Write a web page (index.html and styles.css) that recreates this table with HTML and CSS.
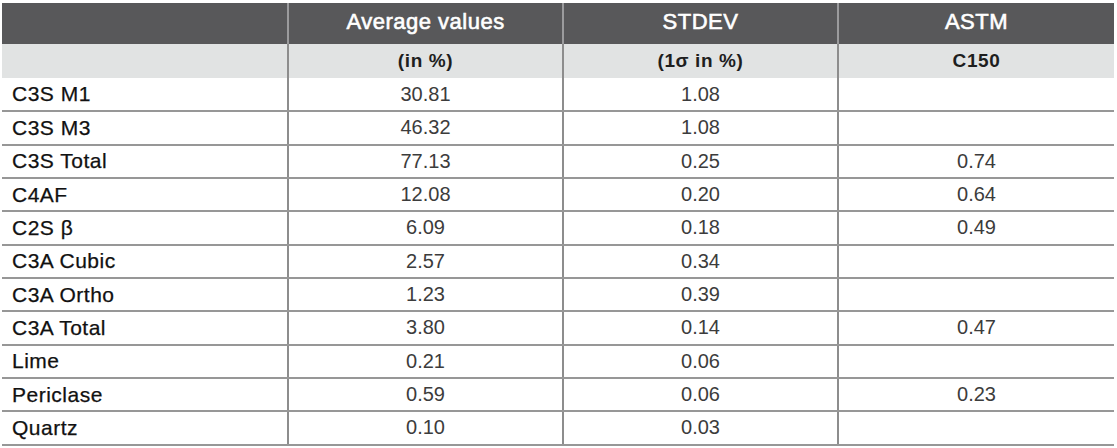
FILE: index.html
```html
<!DOCTYPE html>
<html>
<head>
<meta charset="utf-8">
<link rel="stylesheet" href="styles.css">
</head>
<body>
<table class="data">
  <colgroup>
    <col class="c-label"><col class="c-val"><col class="c-val"><col class="c-last">
  </colgroup>
  <thead>
    <tr class="head">
      <th></th><th>Average values</th><th>STDEV</th><th>ASTM</th>
    </tr>
    <tr class="sub">
      <th></th><th>(in %)</th><th>(1σ in %)</th><th>C150</th>
    </tr>
  </thead>
  <tbody>
    <tr><td class="lbl">C3S M1</td><td>30.81</td><td>1.08</td><td></td></tr>
    <tr><td class="lbl">C3S M3</td><td>46.32</td><td>1.08</td><td></td></tr>
    <tr><td class="lbl">C3S Total</td><td>77.13</td><td>0.25</td><td>0.74</td></tr>
    <tr><td class="lbl">C4AF</td><td>12.08</td><td>0.20</td><td>0.64</td></tr>
    <tr><td class="lbl">C2S β</td><td>6.09</td><td>0.18</td><td>0.49</td></tr>
    <tr><td class="lbl">C3A Cubic</td><td>2.57</td><td>0.34</td><td></td></tr>
    <tr><td class="lbl">C3A Ortho</td><td>1.23</td><td>0.39</td><td></td></tr>
    <tr><td class="lbl">C3A Total</td><td>3.80</td><td>0.14</td><td>0.47</td></tr>
    <tr><td class="lbl">Lime</td><td>0.21</td><td>0.06</td><td></td></tr>
    <tr><td class="lbl">Periclase</td><td>0.59</td><td>0.06</td><td>0.23</td></tr>
    <tr><td class="lbl">Quartz</td><td>0.10</td><td>0.03</td><td></td></tr>
  </tbody>
</table>
</body>
</html>
```
FILE: styles.css
```css
html, body {
  margin: 0;
  padding: 0;
  background: #ffffff;
}
body {
  padding: 3px 0 0 2px;
  font-family: "Liberation Sans", Arial, sans-serif;
}
.data {
  border-collapse: collapse;
  table-layout: fixed;
  width: 1112px;
}
.c-label { width: 286px; }
.c-val { width: 275px; }
.c-last { width: 276px; }

.data th, .data td {
  padding: 0;
  text-align: center;
  vertical-align: middle;
  box-sizing: border-box;
}
.head th {
  background: #58585a;
  color: #ffffff;
  font-weight: normal;
  font-size: 22px;
  letter-spacing: 0.5px;
  -webkit-text-stroke: 0.6px #ffffff;
  height: 41px;
  padding-bottom: 3px;
  border-left: 2px solid #9b9b9d;
}
.sub th {
  background: #e1e3e3;
  color: #1e1e1e;
  font-weight: bold;
  font-size: 19px;
  letter-spacing: 0.6px;
  height: 34px;
  border-left: 2px solid #8d8d8d;
}
.head th:first-child, .sub th:first-child { border-left: none; }
.data td {
  height: 33.33px;
  font-size: 20px;
  color: #3c3c3c;
  border-bottom: 2px solid #979797;
  border-left: 2px solid #8d8d8d;
}
.data td.lbl {
  border-left: none;
  text-align: left;
  padding-left: 10px;
  font-size: 21px;
  letter-spacing: 0.5px;
  -webkit-text-stroke: 0.25px #111111;
  color: #111111;
}
```
